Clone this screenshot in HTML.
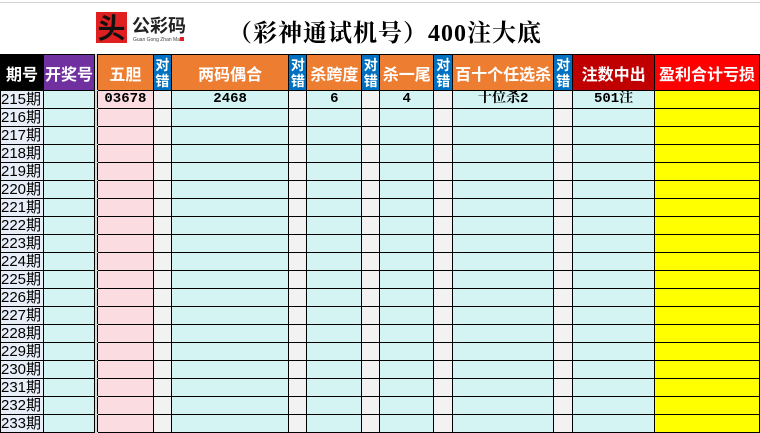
<!DOCTYPE html><html><head><meta charset="utf-8"><style>
body{margin:0;width:760px;height:425px;overflow:hidden;background:#fff;font-family:"Liberation Sans","Noto Sans CJK SC",sans-serif}
.top{position:absolute;left:0;top:0;width:760px;height:2px;border-bottom:1px solid #d4d4d4}
.logo{position:absolute;left:96px;top:12px}
.title{position:absolute;left:228px;top:13px;font:bold 24px "Liberation Serif","Noto Serif CJK SC",serif;color:#000;white-space:nowrap;letter-spacing:1px}
table{position:absolute;left:0;top:54px;border-collapse:collapse;table-layout:fixed}
td{border:1px solid #000;padding:0;text-align:center;overflow:hidden;white-space:nowrap}
tr.h td{height:35px;color:#fff;font-weight:bold;font-size:16px}
tr.h td.s{font-size:14px;line-height:16px;white-space:normal}
tr.d td{height:17px;font-size:14px;font-weight:bold;line-height:17px;font-family:"Liberation Mono","Noto Serif CJK SC",monospace}
.k{background:#000}.p{background:#7030a0}.o{background:#ed7d31}.b{background:#0070c0}.r{background:#c00000}.R{background:#ff0000}
td.g{background:#d9d9d9;border-top:1px solid #d9d9d9;border-bottom:1px solid #d9d9d9}
tr.d td.q{background:#e8eef8;font-weight:normal;font-size:15px;text-align:left;font-family:"Liberation Sans","Noto Sans CJK SC",sans-serif}
.c{background:#d3f4f2}.pk{background:#fbdce0}.x{background:#f2f2f2}.y{background:#ffff00}
</style></head><body>
<div class="top"></div>
<div class="logo"><svg width="92" height="32"><rect x="0" y="0" width="31" height="31" fill="#e02020"/><text x="15.5" y="26" font-size="28" font-weight="bold" text-anchor="middle" fill="#111" font-family="Noto Sans CJK SC">头</text><text x="36" y="20" font-size="18" font-weight="bold" fill="#222" font-family="Noto Sans CJK SC">公彩码</text><text x="37" y="29" font-size="5" fill="#444">Guan Gong Zhan Ma</text><rect x="84" y="25" width="4" height="4" fill="#e02020"/></svg></div>
<div class="title">（彩神通试机号）400注大底</div>
<table>
<colgroup><col style="width:43px"><col style="width:51px"><col style="width:3px"><col style="width:56px"><col style="width:18px"><col style="width:118px"><col style="width:18px"><col style="width:55px"><col style="width:18px"><col style="width:54px"><col style="width:19px"><col style="width:101px"><col style="width:19px"><col style="width:82px"><col style="width:105px"></colgroup>
<tr class="h"><td class="k">期号</td><td class="p">开奖号</td><td class="g"></td><td class="o">五胆</td><td class="b s">对错</td><td class="o">两码偶合</td><td class="b s">对错</td><td class="o">杀跨度</td><td class="b s">对错</td><td class="o">杀一尾</td><td class="b s">对错</td><td class="o">百十个任选杀</td><td class="b s">对错</td><td class="r">注数中出</td><td class="R">盈利合计亏损</td></tr>
<tr class="d"><td class="q">215期</td><td class="c"></td><td class="g"></td><td class="pk">03678</td><td class="x"></td><td class="c">2468</td><td class="x"></td><td class="c">6</td><td class="x"></td><td class="c">4</td><td class="x"></td><td class="c">十位杀2</td><td class="x"></td><td class="c">501注</td><td class="y"></td></tr>
<tr class="d"><td class="q">216期</td><td class="c"></td><td class="g"></td><td class="pk"></td><td class="x"></td><td class="c"></td><td class="x"></td><td class="c"></td><td class="x"></td><td class="c"></td><td class="x"></td><td class="c"></td><td class="x"></td><td class="c"></td><td class="y"></td></tr>
<tr class="d"><td class="q">217期</td><td class="c"></td><td class="g"></td><td class="pk"></td><td class="x"></td><td class="c"></td><td class="x"></td><td class="c"></td><td class="x"></td><td class="c"></td><td class="x"></td><td class="c"></td><td class="x"></td><td class="c"></td><td class="y"></td></tr>
<tr class="d"><td class="q">218期</td><td class="c"></td><td class="g"></td><td class="pk"></td><td class="x"></td><td class="c"></td><td class="x"></td><td class="c"></td><td class="x"></td><td class="c"></td><td class="x"></td><td class="c"></td><td class="x"></td><td class="c"></td><td class="y"></td></tr>
<tr class="d"><td class="q">219期</td><td class="c"></td><td class="g"></td><td class="pk"></td><td class="x"></td><td class="c"></td><td class="x"></td><td class="c"></td><td class="x"></td><td class="c"></td><td class="x"></td><td class="c"></td><td class="x"></td><td class="c"></td><td class="y"></td></tr>
<tr class="d"><td class="q">220期</td><td class="c"></td><td class="g"></td><td class="pk"></td><td class="x"></td><td class="c"></td><td class="x"></td><td class="c"></td><td class="x"></td><td class="c"></td><td class="x"></td><td class="c"></td><td class="x"></td><td class="c"></td><td class="y"></td></tr>
<tr class="d"><td class="q">221期</td><td class="c"></td><td class="g"></td><td class="pk"></td><td class="x"></td><td class="c"></td><td class="x"></td><td class="c"></td><td class="x"></td><td class="c"></td><td class="x"></td><td class="c"></td><td class="x"></td><td class="c"></td><td class="y"></td></tr>
<tr class="d"><td class="q">222期</td><td class="c"></td><td class="g"></td><td class="pk"></td><td class="x"></td><td class="c"></td><td class="x"></td><td class="c"></td><td class="x"></td><td class="c"></td><td class="x"></td><td class="c"></td><td class="x"></td><td class="c"></td><td class="y"></td></tr>
<tr class="d"><td class="q">223期</td><td class="c"></td><td class="g"></td><td class="pk"></td><td class="x"></td><td class="c"></td><td class="x"></td><td class="c"></td><td class="x"></td><td class="c"></td><td class="x"></td><td class="c"></td><td class="x"></td><td class="c"></td><td class="y"></td></tr>
<tr class="d"><td class="q">224期</td><td class="c"></td><td class="g"></td><td class="pk"></td><td class="x"></td><td class="c"></td><td class="x"></td><td class="c"></td><td class="x"></td><td class="c"></td><td class="x"></td><td class="c"></td><td class="x"></td><td class="c"></td><td class="y"></td></tr>
<tr class="d"><td class="q">225期</td><td class="c"></td><td class="g"></td><td class="pk"></td><td class="x"></td><td class="c"></td><td class="x"></td><td class="c"></td><td class="x"></td><td class="c"></td><td class="x"></td><td class="c"></td><td class="x"></td><td class="c"></td><td class="y"></td></tr>
<tr class="d"><td class="q">226期</td><td class="c"></td><td class="g"></td><td class="pk"></td><td class="x"></td><td class="c"></td><td class="x"></td><td class="c"></td><td class="x"></td><td class="c"></td><td class="x"></td><td class="c"></td><td class="x"></td><td class="c"></td><td class="y"></td></tr>
<tr class="d"><td class="q">227期</td><td class="c"></td><td class="g"></td><td class="pk"></td><td class="x"></td><td class="c"></td><td class="x"></td><td class="c"></td><td class="x"></td><td class="c"></td><td class="x"></td><td class="c"></td><td class="x"></td><td class="c"></td><td class="y"></td></tr>
<tr class="d"><td class="q">228期</td><td class="c"></td><td class="g"></td><td class="pk"></td><td class="x"></td><td class="c"></td><td class="x"></td><td class="c"></td><td class="x"></td><td class="c"></td><td class="x"></td><td class="c"></td><td class="x"></td><td class="c"></td><td class="y"></td></tr>
<tr class="d"><td class="q">229期</td><td class="c"></td><td class="g"></td><td class="pk"></td><td class="x"></td><td class="c"></td><td class="x"></td><td class="c"></td><td class="x"></td><td class="c"></td><td class="x"></td><td class="c"></td><td class="x"></td><td class="c"></td><td class="y"></td></tr>
<tr class="d"><td class="q">230期</td><td class="c"></td><td class="g"></td><td class="pk"></td><td class="x"></td><td class="c"></td><td class="x"></td><td class="c"></td><td class="x"></td><td class="c"></td><td class="x"></td><td class="c"></td><td class="x"></td><td class="c"></td><td class="y"></td></tr>
<tr class="d"><td class="q">231期</td><td class="c"></td><td class="g"></td><td class="pk"></td><td class="x"></td><td class="c"></td><td class="x"></td><td class="c"></td><td class="x"></td><td class="c"></td><td class="x"></td><td class="c"></td><td class="x"></td><td class="c"></td><td class="y"></td></tr>
<tr class="d"><td class="q">232期</td><td class="c"></td><td class="g"></td><td class="pk"></td><td class="x"></td><td class="c"></td><td class="x"></td><td class="c"></td><td class="x"></td><td class="c"></td><td class="x"></td><td class="c"></td><td class="x"></td><td class="c"></td><td class="y"></td></tr>
<tr class="d"><td class="q">233期</td><td class="c"></td><td class="g"></td><td class="pk"></td><td class="x"></td><td class="c"></td><td class="x"></td><td class="c"></td><td class="x"></td><td class="c"></td><td class="x"></td><td class="c"></td><td class="x"></td><td class="c"></td><td class="y"></td></tr>
</table>
</body></html>
